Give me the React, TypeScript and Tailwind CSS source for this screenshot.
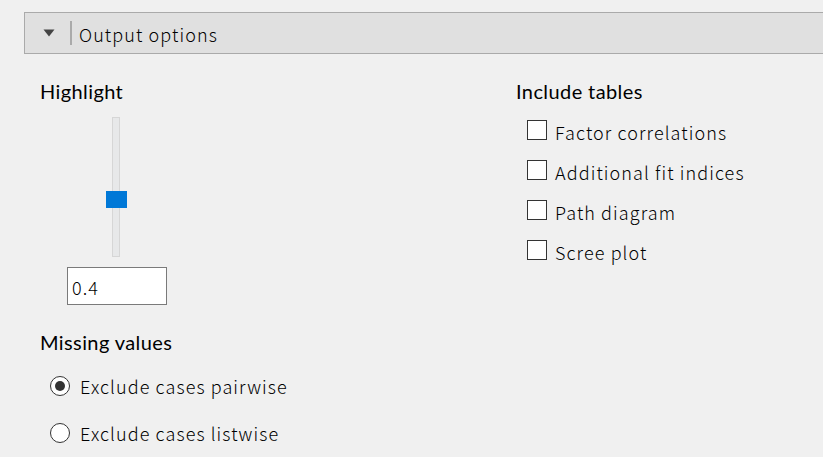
const ui = "font-['Noto_Sans_CJK_JP',sans-serif] font-light tracking-[1.1px]";
const head = "font-['Lato',sans-serif] tracking-[0.4px]";

function Checkbox({ label }: { label: string }) {
  return (
    <div className="flex h-[40px] items-center">
      <span className="ml-[11px] h-[20px] w-[20px] shrink-0 border border-[#333] bg-white" />
      <span className={`${ui} ml-[8px] pt-[3px] text-[18px] leading-none text-black`}>{label}</span>
    </div>
  );
}

function Radio({ label, checked }: { label: string; checked?: boolean }) {
  return (
    <div className="flex h-[47px] items-center">
      <span className="ml-[11px] flex h-[20px] w-[20px] shrink-0 items-center justify-center rounded-full border border-[#333] bg-white">
        {checked && <span className="h-[10px] w-[10px] rounded-full bg-[#333]" />}
      </span>
      <span className={`${ui} ml-[10px] text-[18px] leading-none text-black`}>{label}</span>
    </div>
  );
}

export default function App() {
  return (
    <div className="h-[457px] w-[823px] overflow-hidden bg-[#f0f0f0] pt-[12px] pl-[24px]">
      <div className="flex h-[42px] items-center border-y border-l border-[#aaa] bg-[#e0e0e0]">
        <svg width="12" height="8" viewBox="0 0 12 8" className="ml-[18px]">
          <path d="M0.5 0.5h11L6 7.5z" fill="#444" />
        </svg>
        <span className="ml-[15px] h-[24px] w-[2px] bg-[#aaa]" />
        <span className={`${ui} ml-[7px] pt-[1px] text-[18px] leading-none text-black`}>Output options</span>
      </div>

      <div className="flex">
        <div className="w-[492px]">
          <div className={`${head} mt-[27px] ml-[16px] text-[20px] leading-none text-black`}>Highlight</div>
          <div className="mt-[16px] ml-[81px] flex flex-col items-center w-[22px]">
            <div className="relative h-[140px] w-[8px] border border-[#d6d6d6] bg-[#e7e8e9]">
              <span className="absolute left-[-7px] top-[73px] h-[17px] w-[21px] bg-[#0078d7]" />
            </div>
          </div>
          <div className="mt-[10px] ml-[43px] flex h-[38px] w-[100px] items-center border border-[#7a7a7a] bg-white pl-[4px]">
            <span className={`${ui} pt-[2px] text-[18px] leading-none text-black`}>0.4</span>
          </div>
          <div className={`${head} mt-[27px] ml-[16px] text-[20px] leading-none text-black`}>Missing values</div>
          <div className="mt-[10px] ml-[15px]">
            <Radio label="Exclude cases pairwise" checked />
            <Radio label="Exclude cases listwise" />
          </div>
        </div>
        <div>
          <div className={`${head} mt-[27px] text-[20px] leading-none text-black`}>Include tables</div>
          <div className="mt-[9px]">
            <Checkbox label="Factor correlations" />
            <Checkbox label="Additional fit indices" />
            <Checkbox label="Path diagram" />
            <Checkbox label="Scree plot" />
          </div>
        </div>
      </div>
    </div>
  );
}
